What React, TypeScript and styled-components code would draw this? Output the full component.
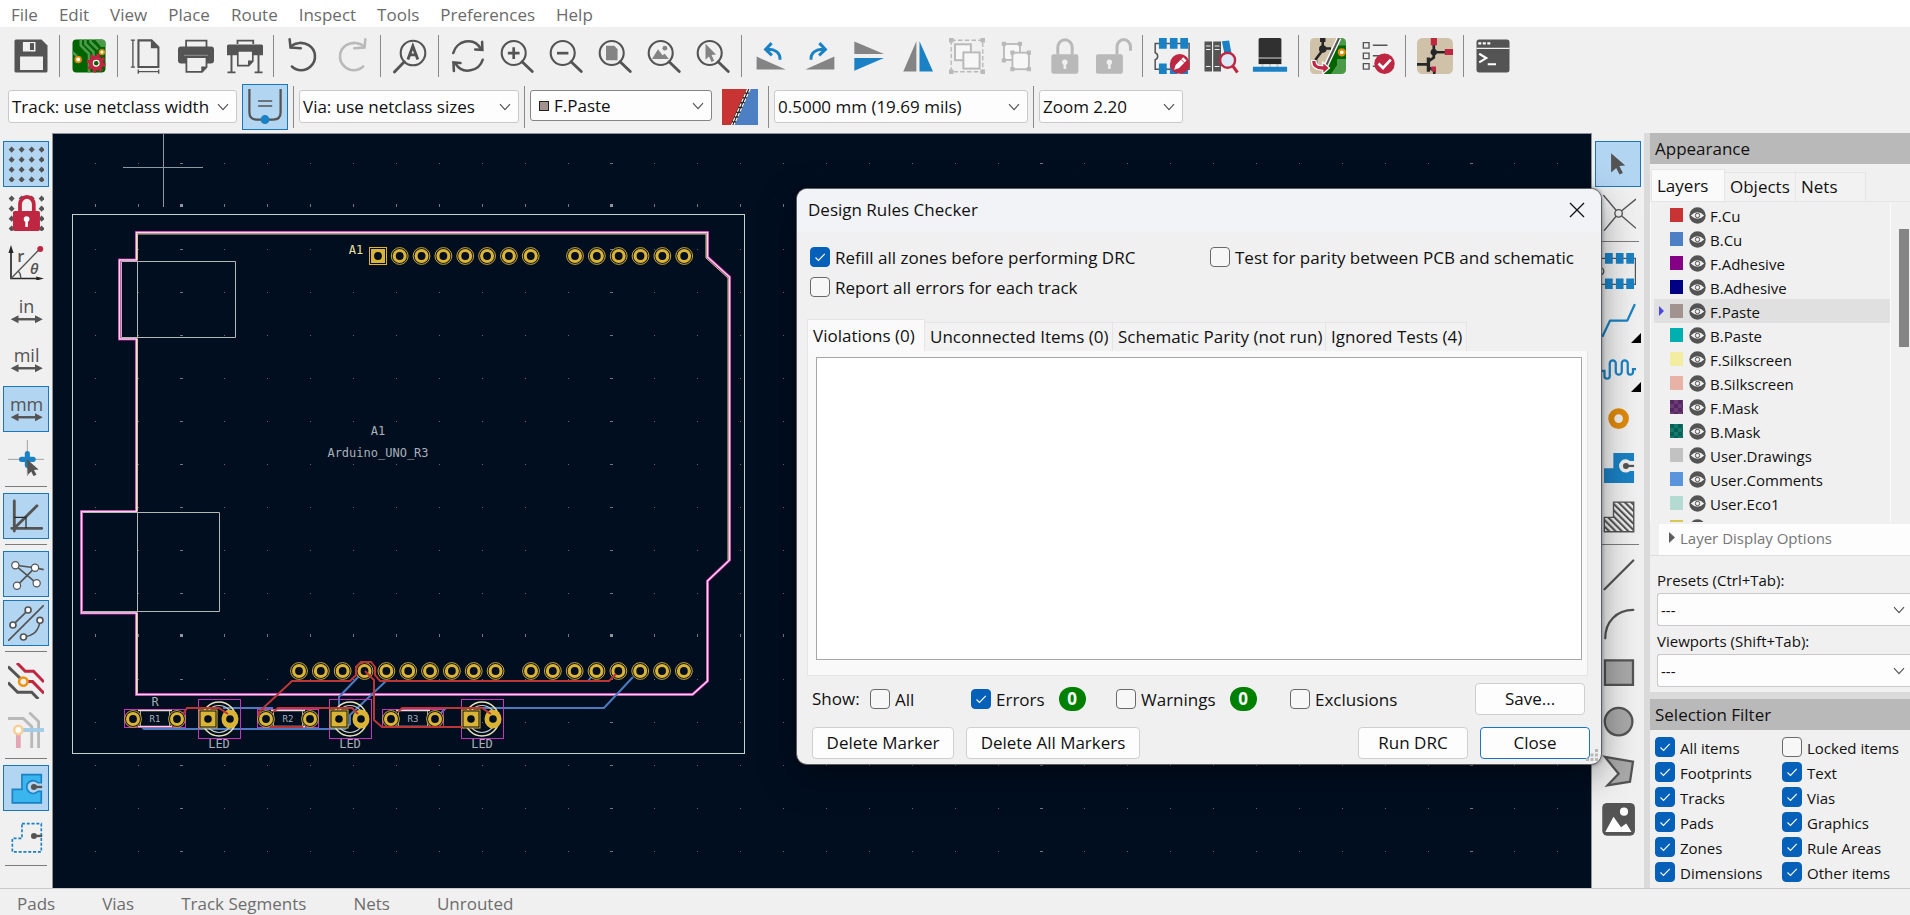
import React from "react";
import styled, { createGlobalStyle, css } from "styled-components";

const DARK = "#545454";
const BLUE = "#1a81c4";
const RED = "#bf2641";
const GREY = "#848484";
const PALE = "#b9b9b9";

const GlobalStyle = createGlobalStyle`
  *, *::before, *::after { box-sizing: border-box; }
  body {
    margin: 0;
    background: #f0f0f0;
    color: #111;
    font-family: "Open Sans", "Noto Sans", sans-serif;
    font-size: 17px;
    line-height: 20px;
  }
  button, input, select { font: inherit; color: inherit; margin: 0; }
  svg { display: block; }
`;

/* ---------- page frame ---------- */

const Page = styled.div`
  position: relative;
  display: flex;
  flex-direction: column;
  min-height: 100vh;
`;

const MenuBar = styled.nav`
  display: flex;
  height: 27px;
  background: #fff;
`;

const MenuItem = styled.button`
  border: 0;
  background: none;
  padding: 2px 10px 0 11px;
  color: #6b6b6b;
`;

const MainToolbar = styled.div`
  display: flex;
  align-items: center;
  height: 57px;
  padding: 0 6px;
`;

const OptionsToolbar = styled.div`
  display: flex;
  align-items: flex-start;
  gap: 5px;
  height: 49px;
  padding: 0 8px;
`;

const Workspace = styled.main`
  display: flex;
  flex: 1;
  min-height: 0;
  border-bottom: 1px solid #c8c8c8;
`;

const SideToolbar = styled.div`
  display: flex;
  flex-direction: column;
  gap: 3px;
  width: 52px;
  flex: none;
  padding: 8px 3px 0;
`;

const Canvas = styled.section`
  flex: 1;
  min-width: 0;
  overflow: hidden;
  position: relative;
  border: 1px solid #8f9296;
  border-bottom: 0;
  background: #000e20;
  svg { position: absolute; inset: 0; }
`;

const StatusBar = styled.footer`
  display: flex;
  align-items: center;
  gap: 47px;
  height: 26px;
  padding: 3px 17px 0;
  color: #6d6d6d;
`;

/* ---------- toolbar parts ---------- */

const ToolButton = styled.button<{ $active?: boolean }>`
  position: relative;
  display: grid;
  place-items: center;
  flex: none;
  width: 46px;
  height: 46px;
  padding: 0;
  border: 1px solid ${(p) => (p.$active ? "#1c76bd" : "transparent")};
  background: ${(p) => (p.$active ? "#b2d5f2" : "transparent")};
`;

const BarButton = styled(ToolButton)`
  margin: 0 1px 0 2px;
`;

const Corner = styled.span`
  position: absolute;
  right: -1px;
  bottom: -1px;
  border: 5px solid #000;
  border-top-color: transparent;
  border-left-color: transparent;
`;

const BarSeparator = styled.i`
  flex: none;
  width: 1px;
  height: 42px;
  margin: 0 4px;
  background: #8a8a8a;
`;

const OptionSeparator = styled.i`
  flex: none;
  width: 1px;
  height: 42px;
  margin-top: 2px;
  background: #8a8a8a;
`;

const SideSeparator = styled.i`
  height: 1px;
  margin: 2px 2px 3px;
  background: #7c7c7c;
`;

const Combo = styled.span<{ $width?: number; $strong?: boolean; $open?: boolean }>`
  display: grid;
  align-items: center;
  flex: none;
  width: ${(p) => (p.$width ? `${p.$width}px` : "100%")};
  margin-top: ${(p) => (p.$width ? 6 : 0)}px;
  > * { grid-area: 1 / 1; }
  > svg { justify-self: end; margin-right: ${(p) => (p.$open ? 5 : 8)}px; pointer-events: none; }
  select {
    appearance: none;
    width: 100%;
    height: ${(p) => (p.$strong ? 31 : 33)}px;
    padding: 0 20px 0 ${(p) => (p.$strong ? 23 : 3)}px;
    border: 1px solid ${(p) => (p.$strong ? "#868686" : "#c9c9c9")};
    border-radius: 3px;
    background: #fdfdfd;
    color: #111;
    ${(p) => p.$open && css`
      border-right: 0;
      border-radius: 3px 0 0 3px;
      font-size: 15px;
    `}
  }
`;

const Swatch = styled.i<{ $color: string; $framed?: boolean; $checker?: string }>`
  width: ${(p) => (p.$framed ? 10 : 13)}px;
  height: ${(p) => (p.$framed ? 10 : 14)}px;
  margin-left: ${(p) => (p.$framed ? 9 : 0)}px;
  background: ${(p) => p.$color};
  border: ${(p) => (p.$framed ? "1px solid #222" : "0")};
  pointer-events: none;
  ${(p) => p.$checker && css`
    background: repeating-conic-gradient(${p.$color} 0 25%, ${p.$checker} 0 50%) 0 0 / 8px 8px;
  `}
`;

/* ---------- right-hand panel ---------- */

const Panel = styled.aside`
  flex: none;
  width: 266px;
  border-left: 6px solid #dadada;
`;

const PanelTitle = styled.h2`
  margin: 0;
  height: 31px;
  padding: 6px 5px 0;
  background: #b9b9b9;
  font-size: 17px;
  font-weight: 400;
`;

const Tabs = styled.div`
  display: flex;
  align-items: flex-end;
`;

const PanelTabs = styled(Tabs)`
  height: 37px;
  padding-left: 1px;
`;

const Tab = styled.button<{ $selected?: boolean; $width?: number }>`
  width: ${(p) => (p.$width ? `${p.$width}px` : "auto")};
  height: ${(p) => (p.$selected ? 32 : 29)}px;
  padding: 0 4px 0 5px;
  text-align: left;
  white-space: nowrap;
  border: 1px solid #e5e5e5;
  border-bottom: 0;
  border-left-width: ${(p) => (p.$selected ? 1 : 0)}px;
  background: ${(p) => (p.$selected ? "#fafafa" : "#f2f2f2")};
`;

const LayerPage = styled.div`
  display: flex;
  border-top: 1px solid #e5e5e5;
  border-left: 1px solid #fafafa;
  padding: 1px 0 0 3px;
  height: 321px;
`;

const LayerList = styled.ul`
  flex: 1;
  margin: 0;
  padding: 0;
  overflow: hidden;
  list-style: none;
  background: #f0f0f0;
  font-size: 15px;
`;

const LayerRow = styled.li<{ $current?: boolean }>`
  display: grid;
  grid-template-columns: 16px 19px 21px 1fr;
  align-items: center;
  height: 24px;
  background: ${(p) => (p.$current ? "#e0e0e0" : "transparent")};
  span { padding-top: 1px; }
`;

const ScrollTrack = styled.div`
  width: 20px;
  border-left: 1px solid #fbfbfb;
  padding: 26px 1px 0 8px;
`;

const ScrollThumb = styled.div`
  height: 118px;
  background: #858585;
`;

const DisplayOptions = styled.button`
  display: flex;
  align-items: center;
  gap: 5px;
  width: calc(100% - 9px);
  height: 31px;
  margin: 2px 0 0 9px;
  padding: 0 10px 4px;
  border: 0;
  background: #fdfdfd;
  color: #767676;
  font-size: 15px;
`;

const PresetForm = styled.div`
  display: flex;
  flex-direction: column;
  border-top: 1px solid #dedede;
  padding: 14px 0 0 7px;
  font-size: 15px;
  label { height: 23px; }
  label + span { margin-bottom: 5px; }
`;

const FilterTitle = styled(PanelTitle)`
  border-top: 7px solid #dadada;
  height: 38px;
`;

const FilterGrid = styled.div`
  display: grid;
  grid-template-columns: 127px 1fr;
  row-gap: 5px;
  padding: 7px 0 6px 5px;
  font-size: 15px;
  white-space: nowrap;
`;

/* ---------- check box ---------- */

const CheckLabel = styled.label`
  display: flex;
  align-items: center;
  gap: 5px;
  height: 20px;
`;

const CheckCell = styled.span`
  display: grid;
  place-items: center;
  > * { grid-area: 1 / 1; }
  svg { pointer-events: none; visibility: hidden; }
  input {
    appearance: none;
    width: 20px;
    height: 20px;
    border: 1px solid #6a6a6a;
    border-radius: 4px;
    background: #f7f7f7;
  }
  input:checked { background: #0560b9; border-color: #0560b9; }
  input:checked + svg { visibility: visible; }
`;

const CheckText = styled.span`
  padding-top: 2px;
`;

function Check({ label, checked }: { label: string; checked?: boolean }) {
  return (
    <CheckLabel>
      <CheckCell>
        <input type="checkbox" defaultChecked={checked} />
        <svg width="12" height="12" viewBox="0 0 12 12" fill="none" stroke="#fff" strokeWidth="1.1">
          <path d="M1.5 6.5 4.5 9.5 10.8 2.8" />
        </svg>
      </CheckCell>
      <CheckText>{label}</CheckText>
    </CheckLabel>
  );
}

/* ---------- dialog ---------- */

const Dialog = styled.section`
  position: absolute;
  left: 796px;
  top: 188px;
  width: 806px;
  border: 1px solid #5a5f66;
  border-radius: 11px;
  background: #f0f0f0;
  box-shadow: 0 12px 36px rgba(0, 0, 0, 0.38), 0 0 4px rgba(0, 0, 0, 0.4);
  overflow: hidden;
`;

const DialogTitle = styled.header`
  display: flex;
  align-items: center;
  justify-content: space-between;
  height: 43px;
  padding: 0 16px 2px 11px;
  background: #f1f3f7;
  h1 { margin: 0; font-size: 17px; font-weight: 400; }
  button { border: 0; background: none; padding: 0; }
`;

const DialogBody = styled.div`
  padding: 15px 11px 5px 10px;
`;

const RunOptions = styled.div`
  display: grid;
  grid-template-columns: 400px 1fr;
  gap: 10px 0;
  padding: 0 3px 22px;
  white-space: nowrap;
`;

const ResultPage = styled.div`
  height: 325px;
  margin-right: 2px;
  padding: 6px 5px 15px 8px;
  border: 1px solid #e5e5e5;
  border-top: 0;
  background: #f9f9f9;
`;

const ResultList = styled.div`
  height: 303px;
  border: 1px solid #a6a6a6;
  background: #fff;
`;

const ShowRow = styled.div`
  display: grid;
  grid-template-columns: 58px 101px 145px 174px 1fr 110px;
  align-items: center;
  padding: 7px 5px 12px 5px;
`;

const CountGroup = styled.div`
  display: flex;
  align-items: center;
  gap: 14px;
`;

const Count = styled.b`
  width: 27px;
  height: 24px;
  border-radius: 12px;
  background: #008000;
  color: #fff;
  font-size: 17px;
  line-height: 23px;
  text-align: center;
`;

const ButtonRow = styled.div`
  display: flex;
  gap: 12px;
  padding-left: 5px;
`;

const PushButton = styled.button<{ $width: number; $primary?: boolean; $pushRight?: boolean }>`
  width: ${(p) => p.$width}px;
  height: 32px;
  margin-left: ${(p) => (p.$pushRight ? "auto" : "0")};
  padding: 0;
  border: 1px solid ${(p) => (p.$primary ? "#1c76bd" : "#cfcfcf")};
  border-radius: 4px;
  background: #fdfdfd;
`;

const Grip = styled.svg`
  position: absolute;
  right: 3px;
  bottom: 3px;
`;

/* ---------- icons, all on a 24-unit grid ---------- */

function Icon({ children }: { children: React.ReactNode }) {
  return (
    <svg width="36" height="36" viewBox="0 0 24 24" fill="none" aria-hidden="true">
      {children}
    </svg>
  );
}

const Chevron = () => (
  <svg width="12" height="8" viewBox="0 0 12 8" fill="none" stroke="#555" strokeWidth="1.2">
    <path d="M1 1.2 6 6.6 11 1.2" />
  </svg>
);

const Lens = ({ children }: { children?: React.ReactNode }) => (
  <Icon>
    <circle cx="9.8" cy="10" r="8" stroke={DARK} strokeWidth="1.4" />
    <path d="M15.4 15.8 22.2 22.4" stroke={DARK} strokeWidth="1.9" strokeLinecap="round" />
    {children}
  </Icon>
);

const Save = () => (
  <Icon>
    <path fill={DARK} d="M2 1H19L23 5V22a1 1 0 0 1-1 1H2a1 1 0 0 1-1-1V2A1 1 0 0 1 2 1Z" />
    <path fill="#f0f0f0" d="M6.6 2.6H15V9H6.6ZM4.7 12.4H20V21.4H4.7Z" />
    <path fill={DARK} d="M11.3 3.4h2.7V8h-2.7Z" />
  </Icon>
);

const BoardSetup = () => (
  <Icon>
    <defs><clipPath id="bs"><rect x="1" y="1" width="22" height="22" rx="2.6" /></clipPath></defs>
    <g clipPath="url(#bs)">
      <path fill="#006400" d="M0 0h24v24H0Z" />
      <path stroke="#4c9a4a" strokeWidth="1.7" d="M6.5 0V5L12 10.5V24M9.6 0V4L15 9.4V12M13 0V2.6L18 7.6M1 9.5 4 12" />
      <path fill="#4c9a4a" d="M15 0H24V6L20 6Z" />
      <circle cx="4.8" cy="14.3" r="1.9" fill="#fff" stroke="#e08a0a" strokeWidth="1.2" />
      <circle cx="20.6" cy="9.4" r="1.6" fill="#fff" stroke="#e08a0a" strokeWidth="1.1" />
    </g>
    <circle cx="16.8" cy="16.8" r="3.6" stroke={RED} strokeWidth="2.6" fill="#fff" />
    <circle cx="16.8" cy="16.8" r="5.3" stroke={RED} strokeWidth="2.2" strokeDasharray="2.1 2.06" />
    <circle cx="16.8" cy="16.8" r="1.5" fill="#006400" />
  </Icon>
);

const PageSetup = () => (
  <Icon>
    <path stroke={DARK} strokeWidth="1.4" d="M6.3 1.6H15L19.6 6.2V19.3H6.3Z" />
    <path fill={DARK} d="M14.6 1.6V6.8H19.8Z" />
    <path stroke={DARK} strokeWidth=".9" d="M2.6 1.4V19.4M1.2 1.4H4M1.2 19.4H4M6.2 22.4H19.8M6.2 21V23.8M19.8 21V23.8" />
  </Icon>
);

const Print = () => (
  <Icon>
    <path stroke={DARK} strokeWidth="1.2" d="M5.4 6V1.7H19V6" />
    <path fill={DARK} d="M2 5.6H22a2 2 0 0 1 2 2V15a2 2 0 0 1-2 2H2a2 2 0 0 1-2-2V7.6A2 2 0 0 1 2 5.6Z" />
    <path stroke={GREY} strokeWidth=".9" d="M4 11.6H20" />
    <path fill="#f0f0f0" stroke={DARK} strokeWidth="1.2" d="M5.6 12.7H19V19.5L16 22.6H5.6Z" />
    <path fill={DARK} d="M15.5 19H19.4L15.5 23Z" />
  </Icon>
);

const Plot = () => (
  <Icon>
    <path stroke={DARK} strokeWidth="1.2" d="M7 4V1.7H17.5V4" />
    <path fill={DARK} d="M1 4.3H23a1 1 0 0 1 1 1V11.5H0V5.3A1 1 0 0 1 1 4.3Z" />
    <path fill="#f0f0f0" stroke={DARK} strokeWidth="1.1" d="M7.2 8.6H17.2V15.5L14.5 18.4H7.2Z" />
    <path fill={DARK} d="M14 15H17.6L14 18.9Z" />
    <path stroke={DARK} strokeWidth="1.3" d="M3 11V22.7M21 11V22.7M.3 22.9H5.7M18.4 22.9H23.7" />
  </Icon>
);

const Undo = ({ redo }: { redo?: boolean }) => (
  <Icon>
    <g transform={redo ? "matrix(-1 0 0 1 24 0)" : undefined} stroke={redo ? PALE : DARK} strokeWidth="1.7" strokeLinecap="round">
      <path d="M4 5.5C7 2.9 12 2.4 15.8 4.8A8.9 8.9 0 0 1 17 19C13.5 22.4 8 22.3 4.6 19" />
      <path d="M3.1 .9 3.7 6.4 10.5 6.8" />
    </g>
  </Icon>
);

const Find = () => (
  <Icon>
    <circle cx="14" cy="10" r="8.2" stroke={DARK} strokeWidth="1.4" />
    <path d="M8.2 15.8 1.6 22.6" stroke={DARK} strokeWidth="1.9" strokeLinecap="round" />
    <path d="M10.6 14.4 13.9 5.4 17.2 14.4M11.8 11.2H16" stroke={DARK} strokeWidth="1.9" />
  </Icon>
);

const Refresh = () => (
  <Icon>
    <g stroke={DARK} strokeWidth="1.7" strokeLinecap="round">
      <path d="M2.2 10C4 2.2 15.5-1.5 20.6 7.2" />
      <path d="M21.4 2.6 21.6 7.9 16.8 7.7" />
      <path d="M21.8 14.5C19.5 22 8.6 25 3.6 17" />
      <path d="M2.6 22 2.3 16.3 7 16.6" />
    </g>
  </Icon>
);

const Rotate = ({ cw }: { cw?: boolean }) => (
  <Icon>
    <g transform={cw ? "matrix(-1 0 0 1 24 0)" : undefined}>
      <path fill={GREY} d="M2.4 12.4V21H21.8Z" />
      <path stroke={BLUE} strokeWidth="2" d="M18 14.5C18.3 9.8 14.5 7 9 7.6M12.4 3.4 8.4 7.6 12.6 11.6" />
    </g>
  </Icon>
);

const FlipV = () => (
  <Icon>
    <path fill={GREY} d="M2.2 2.4 22 10.7H2.2Z" />
    <path fill={BLUE} d="M2.2 21.8 22 13.3H2.2Z" />
  </Icon>
);

const FlipH = () => (
  <Icon>
    <path fill={GREY} d="M10.9 2.2V22.4H2.2Z" />
    <path fill={BLUE} d="M13 2.2V22.4H22Z" />
  </Icon>
);

const Group = () => (
  <Icon>
    <rect x="1.5" y="1.5" width="21" height="21" stroke={PALE} strokeWidth=".9" strokeDasharray="3 1.5" />
    <rect x="4" y="4.2" width="10.6" height="10.6" fill="#f7f7f7" stroke={PALE} strokeWidth="1.3" />
    <rect x="9.6" y="9.6" width="10.8" height="10.8" fill="#f7f7f7" stroke={PALE} strokeWidth="1.3" />
    <path fill={PALE} d="M0 0H3V3H0ZM21 0H24V3H21ZM0 21H3V24H0ZM21 21H24V24H21Z" />
  </Icon>
);

const Ungroup = () => (
  <Icon>
    <rect x="4" y="4" width="10.6" height="10.6" fill="#f7f7f7" stroke={PALE} strokeWidth="1.2" />
    <rect x="9.6" y="9.8" width="11" height="11" fill="#f7f7f7" stroke={PALE} strokeWidth="1.2" />
    <path fill={PALE} d="M2.5 2.5H5.3V5.3H2.5ZM13.2 2.5H16V5.3H13.2ZM2.5 13.5H5.3V16.3H2.5ZM8.2 8.4H11V11.2H8.2ZM19.2 8.4H22V11.2H19.2ZM8.2 19.4H11V22.2H8.2ZM19.2 19.4H22V22.2H19.2Z" />
  </Icon>
);

const Padlock = ({ open }: { open?: boolean }) => (
  <Icon>
    <g transform={open ? "translate(-3 0)" : undefined}>
      <rect x="2.9" y="10.8" width="18" height="13" rx="1.5" fill={PALE} />
      <path stroke={PALE} strokeWidth="2" d={open ? "M17 11V6A4.500 5 0 0 1 26 6V8.500" : "M7.2 11V6.3A4.8 5.2 0 0 1 16.8 6.3V11"} />
      <circle cx="11.9" cy="16.2" r="1.8" fill="#f0f0f0" />
      <path d="M11.9 17V20.6" stroke="#f0f0f0" strokeWidth="1.7" />
    </g>
  </Icon>
);

const FootprintPads = () => (
  <path fill={BLUE} d="M3.3 0H8.5V7.2H3.3ZM10.6 0H15.7V7.2H10.6ZM17.5 0H22.7V7.2H17.5ZM3.3 17H8.5V24H3.3ZM10.6 17H15.7V24H10.6ZM17.5 17H22.7V24H17.5Z" />
);

const Footprint = () => (
  <Icon>
    <path stroke={DARK} strokeWidth=".8" d="M.9 3.6H23.6V20.9H.9V14.5A2.5 2.5 0 0 0 .9 9.8Z" />
    <FootprintPads />
  </Icon>
);

const FootprintEdit = () => (
  <Icon>
    <path stroke={DARK} strokeWidth="1" d="M.8 3.6H23.4V20.9H.8V14.5A2.5 2.5 0 0 0 .8 9.8Z" />
    <FootprintPads />
    <circle cx="17.2" cy="17.3" r="6.6" fill={RED} />
    <path d="M13.4 21.2 14.4 18 19.5 12.800 21.700 15 16.600 20.200Z" fill="#fff" />
    <path d="M18 14.200 20.300 16.500" stroke={RED} strokeWidth=".6" />
  </Icon>
);

const Library = () => (
  <Icon>
    <path fill={DARK} d="M1 2.4H6V22.4H1ZM6.8 2.4H12V22.4H6.8Z" />
    <path stroke="#f0f0f0" strokeWidth=".7" d="M2 5.3H5M2 7.6H5M2 19H5M7.8 5.3H11M7.8 7.6H11M7.8 19H11" />
    <path fill={BLUE} d="M12.6 2.2 17.4 1.6 20.5 18 16 19Z" />
    <circle cx="16.4" cy="14.8" r="5" fill="#dbeaf6" stroke={RED} strokeWidth="1.6" />
    <path d="M19.8 18.6 23 23" stroke={RED} strokeWidth="2" />
  </Icon>
);

const Chip3D = () => (
  <Icon>
    <path stroke="#cfcfcf" strokeWidth="1.4" d="M7 16V20M12 16V20M17 16V20" />
    <path fill="#303030" d="M5.4 0H18.6Q19.6 0 19.6 1V13H4.4V1Q4.4 0 5.4 0Z" />
    <path fill="#262626" d="M4.4 13.700H19.600V17.400H4.400Z" />
    <path stroke="#777" strokeWidth=".8" d="M4.4 13.3H19.6" />
    <path fill={BLUE} d="M.6 19.2H23.4V22.5H.6Z" />
  </Icon>
);

const UpdatePcb = () => (
  <Icon>
    <defs><clipPath id="up"><rect width="24" height="24" rx="3" /></clipPath></defs>
    <g clipPath="url(#up)">
      <path fill="#d0c2a8" d="M0 0H24V24H0Z" />
      <path fill="#4a9a48" d="M20 0H24V24H8Z" />
      <path fill="#006400" d="M18.5 5H24V14H18V18L14 24H9Z" />
      <path stroke="#262626" strokeWidth="1.7" d="M8.5 0V7M8.5 7H14M8.5 8 4 14V18" />
      <path fill="#262626" d="M6.7 0H10.3V2.6H6.7Z" />
      <circle cx="8.5" cy="7.4" r="2.5" fill="#262626" />
      <path stroke="#fff" strokeWidth="3.2" d="M19.4 0 9 22" />
      <path stroke={DARK} strokeWidth="1.4" d="M19.4 0 10 20" />
      <circle cx="21.2" cy="9.5" r="2" fill="#fff" stroke="#e08a0a" strokeWidth="1.5" />
      <path d="M4 15C4 18.5 6 18.5 8.5 18.5V16L13 20 8.5 24V21.5C3 21.5 1 19 1 15Z" fill={RED} stroke="#fff" strokeWidth=".8" />
    </g>
  </Icon>
);

const RuleCheck = () => (
  <Icon>
    <path stroke={DARK} strokeWidth=".9" d="M2.9 3.1H6.7V6.7H2.9ZM2.9 10.1H6.7V13.7H2.9ZM2.9 17.1H6.7V20.7H2.9Z" />
    <path stroke={DARK} strokeWidth="1" d="M9.2 4.9H19M9.2 11.9H14M9.2 18.9H11" />
    <circle cx="17" cy="17.2" r="6.8" fill={RED} />
    <path d="M13 17 16 20 21.2 14.4" stroke="#fff" strokeWidth="1.8" />
  </Icon>
);

const Schematic = () => (
  <Icon>
    <rect width="24" height="24" rx="3.5" fill="#d0c2a8" />
    <path stroke="#262626" strokeWidth="1.800" d="M11.2 3V9.5H20M11.2 9.5V13L7.8 15.5V19.5L11.5 22V24M0 17.6H7.6" />
    <path stroke="#262626" strokeWidth="2.200" d="M7.6 13V22.5" />
    <circle cx="11.2" cy="9.5" r="2.1" fill="#262626" />
    <path fill={RED} d="M9.2 0H13.3V4.8H9.2ZM18.5 7.4H24V11.3H18.5ZM9.5 19H12.7V23L9.5 21.5Z" />
  </Icon>
);

const Terminal = () => (
  <Icon>
    <rect x="1" y="1" width="22" height="22" rx="1.8" fill={DARK} />
    <path stroke="#f0f0f0" strokeWidth=".9" d="M1 6.9H23" />
    <path stroke="#fff" strokeWidth="1.5" strokeDasharray="2 1" d="M2.2 3.5H10.6" />
    <path stroke="#fff" strokeWidth="1.4" d="M2.8 10.5 7.5 13.4 2.8 16.2M8.5 17.5H14" />
  </Icon>
);

const TrackVia = () => (
  <Icon>
    <path stroke={DARK} strokeWidth="1.5" d="M1.6 0V15.5Q1.6 20.4 6.5 20.4H17.5Q22.4 20.4 22.4 15.5V0" />
    <path stroke={DARK} strokeWidth="1" d="M7.4 8H16.8M7.4 11.4H16.8" />
    <circle cx="12" cy="20.4" r="3" fill={BLUE} />
  </Icon>
);

const LayerPair = () => (
  <Icon>
    <path fill="#c83434" d="M0 0H17L6 24H0Z" />
    <path fill="#4d7fc4" d="M18.5 0H24V24H7.5Z" />
    <path stroke="#222" strokeWidth="2.6" d="M17.8 0 7 24" />
    <path stroke="#fff" strokeWidth=".8" strokeDasharray="2.5 1" d="M17 0 6.4 24M18.8 0 8 24" />
  </Icon>
);

const dotAxis = [2.4, 9.1, 15.8, 22.4];
const GridDots = () => (
  <>
    {dotAxis.flatMap((y) => dotAxis.map((x) => (
      <path key={`${x}-${y}`} fill={DARK} d={`M${x} ${y - 2.1}L${x + 2} ${y} ${x} ${y + 2.1} ${x - 2} ${y}Z`} />
    )))}
  </>
);

const Grid = () => <Icon><GridDots /></Icon>;

const GridLock = () => (
  <Icon>
    <GridDots />
    <path stroke="#f0f0f0" strokeWidth="4" d="M8 11V6.5A4.6 4.6 0 0 1 17 6.5V11" fill="#f0f0f0" />
    <path stroke={RED} strokeWidth="2.5" d="M8 11.5V6.2A4.6 4.9 0 0 1 17.2 6.2V11.5" />
    <rect x="3.3" y="10.7" width="18" height="13.3" rx="1.2" fill={RED} />
    <circle cx="12.4" cy="16" r="1.9" fill="#fff" />
    <path stroke="#fff" strokeWidth="1.7" d="M12.4 17V21.3" />
  </Icon>
);

const Polar = () => (
  <Icon>
    <path stroke="#262626" strokeWidth="1.1" d="M2 4V23H20" />
    <path fill="#262626" d="M2 .6 3.7 6H.3ZM24 23 18.8 21.6V24.4Z" />
    <path stroke={DARK} strokeWidth=".9" d="M2 23 21 3.5M7 18.2Q8.7 20 8.5 23" />
    <circle cx="21.5" cy="3.3" r="2" fill={RED} />
    <text x="6.2" y="11.8" fontSize="11" fontWeight="600" fill={DARK}>r</text>
    <text x="14.6" y="19.8" fontSize="10" fontWeight="600" fontStyle="italic" fill={DARK}>θ</text>
  </Icon>
);

const Units = ({ unit }: { unit: string }) => (
  <Icon>
    <text x="12.4" y="13" textAnchor="middle" fontSize="12" fontWeight="500" fill={DARK}>{unit}</text>
    <path stroke={DARK} strokeWidth="1.6" d="M5 17.5H20" />
    <path fill={DARK} d="M1.8 17.5 7 14.9V20.1ZM23.2 17.5 18 14.9V20.1Z" />
  </Icon>
);

const CursorCross = () => (
  <Icon>
    <path stroke="#9a9a9a" strokeWidth=".6" d="M12.9 0V24M0 12.9H24" />
    <path stroke={BLUE} strokeWidth="3.4" strokeLinecap="round" d="M12.9 9V16.8M9 12.9H16.8" />
    <path fill={DARK} d="M12.4 12.6 20.4 19.6 17.3 20 19 23.2 17 24 15.5 21 13.3 23.2Z" />
  </Icon>
);

const Angle45 = () => (
  <Icon>
    <path stroke={DARK} strokeWidth="1.9" strokeLinecap="round" d="M4.2 2V22M2.5 20.2H22.5M4.2 20.2 19.3 5.2" />
    <path stroke="#262626" strokeWidth=".8" d="M4.2 12.9H12V20.2" />
  </Icon>
);

const Ratsnest = () => (
  <Icon>
    <path stroke={DARK} strokeWidth="1.1" d="M4.9 6.2 19.1 18.2M18 7.8 6 19.8M4.9 6.2 18 7.8 23.8 9.1" />
    <g fill="#fff" stroke={DARK} strokeWidth=".8">
      <circle cx="4.9" cy="6.2" r="2.4" /><circle cx="18" cy="7.8" r="2.4" />
      <circle cx="6" cy="19.8" r="2.4" /><circle cx="19.1" cy="18.2" r="2.4" />
    </g>
  </Icon>
);

const CurvedRatsnest = () => (
  <Icon>
    <path stroke={DARK} strokeWidth="1.1" d="M0 24 24 0M13.6 3.3 3.3 13.3M21.3 10.2Q20.5 20.5 10.2 21.3" />
    <g fill="#fff" stroke={DARK} strokeWidth="1.1">
      <circle cx="13.4" cy="3.3" r="2" /><circle cx="3.3" cy="13.3" r="2" />
      <circle cx="21.3" cy="10.2" r="2" /><circle cx="10.3" cy="21.3" r="2" />
    </g>
  </Icon>
);

const NetColors = () => (
  <Icon>
    <path stroke={DARK} strokeWidth="2" d="M0 2.4 9 11M0 13 6.4 19.5H15.8L20.2 24" />
    <path stroke={RED} strokeWidth="2" d="M6 0 11.5 5.5H17L24 12.7M12 12.4H16.4L24 20.2" />
    <circle cx="10.2" cy="12.4" r="2.8" fill="#f0f0f0" stroke="#ee9410" strokeWidth="1.7" />
  </Icon>
);

const DimNets = () => (
  <Icon>
    <path stroke={PALE} strokeWidth="1.9" d="M0 4.3H10.2L15.8 9.8V24M14.2 .4 20.4 6.4V24" />
    <path stroke="#e3a6b2" strokeWidth="3.2" d="M6.9 13V24" />
    <path stroke="#a3cce6" strokeWidth="2.6" d="M8 12H24" />
    <circle cx="6.9" cy="12" r="2.8" fill="#fff" stroke="#f6ce96" strokeWidth="1.7" />
  </Icon>
);

const ZoneFilled = () => (
  <Icon>
    <path fill="#3bb5ee" stroke={BLUE} strokeWidth="1.1" d="M9.3 3.1H22.2V8.5H20A4.3 4.3 0 1 0 20 14.2H22.2V21.9H2.9V12.9H9.3Z" />
    <circle cx="17.3" cy="11.3" r="2" fill={DARK} />
    <path stroke={DARK} strokeWidth="1.6" d="M17.3 11.3H22.8" />
  </Icon>
);

const ZoneOutline = () => (
  <Icon>
    <path stroke={BLUE} strokeWidth="1.1" strokeDasharray="2 1.2" d="M9.3 3.1H22.2V21.9H2.9V12.9H9.3Z" />
    <circle cx="17.3" cy="11.3" r="2" fill={DARK} />
    <path stroke={DARK} strokeWidth="1.6" d="M17.3 11.3H22.8" />
  </Icon>
);

const Pointer = () => (
  <Icon>
    <path fill={DARK} d="M7.4 4.8 16.8 13 12.9 13.4 15.3 18 13 19 10.8 14.6 7.4 17.6Z" />
  </Icon>
);

const LocalRatsnest = () => (
  <Icon>
    <path stroke={DARK} strokeWidth=".9" d="M2.2 0 12.4 12.2 24 2.7M2.7 23.8 12.4 12.2 24 22.2" />
    <circle cx="12.4" cy="12.2" r="2.5" fill="#f0f0f0" stroke={DARK} strokeWidth=".9" />
  </Icon>
);

const Route = () => (
  <Icon><path stroke={BLUE} strokeWidth="1.5" strokeLinecap="round" strokeLinejoin="round" d="M1.8 22.6 6.7 12.4H18.2L23 2" /></Icon>
);

const Tune = () => (
  <Icon>
    <path stroke={BLUE} strokeWidth="1.5" strokeLinecap="round" d="M1.2 13.2H3V16.6A1.7 1.7 0 0 0 6.5 16.6V8.2A2 2 0 0 1 10.5 8.2V13.8A2 2 0 0 0 14.5 13.8V8.2A2 2 0 0 1 18.5 8.2V14A1.7 1.7 0 0 0 22 14V12H23.5" />
  </Icon>
);

const Via = () => (
  <Icon><circle cx="12.4" cy="12.4" r="4.9" stroke="#e08a0a" strokeWidth="4" /></Icon>
);

const ZoneTool = () => (
  <Icon>
    <path fill={BLUE} d="M8.9 2.7H22.7V8H20A4.4 4.4 0 1 0 20 14.6H22.7V22.7H2.7V12.9H8.9Z" />
    <circle cx="17.3" cy="11.3" r="2" fill={DARK} />
    <path stroke={DARK} strokeWidth="1.5" d="M17.3 11.3H22.7" />
  </Icon>
);

const RuleArea = () => (
  <Icon>
    <defs>
      <pattern id="hatch" width="3" height="3" patternUnits="userSpaceOnUse" patternTransform="rotate(-45)">
        <path fill={DARK} d="M0 0H1.4V3H0Z" />
      </pattern>
    </defs>
    <path fill="url(#hatch)" stroke={DARK} strokeWidth=".9" d="M9 2.7H22.5V22.5H2.9V12.9H9Z" />
  </Icon>
);

const Shape = ({ d, filled }: { d: string; filled?: boolean }) => (
  <Icon><path d={d} stroke={DARK} strokeWidth="1.5" strokeLinecap="round" fill={filled ? "#a9a9a9" : "none"} /></Icon>
);

const Picture = () => (
  <Icon>
    <rect x="1.5" y="1.3" width="21.8" height="21.8" rx="3.2" fill={DARK} />
    <circle cx="16" cy="7.1" r="2.7" fill="#fff" />
    <path fill="#fff" d="M3.5 20.6 9 10.5 14 17.5 17.5 15 21 20.6Z" />
  </Icon>
);

const Eye = () => (
  <svg width="17" height="17" viewBox="0 0 17 17" fill="none">
    <circle cx="8.5" cy="8.5" r="8.2" fill={DARK} />
    <path d="M1.8 8.5Q8.5 1.8 15.2 8.5 8.5 15.2 1.8 8.5Z" fill="#f0f0f0" />
    <circle cx="8.5" cy="8.5" r="2.2" stroke={DARK} strokeWidth="1" />
  </svg>
);

/* ---------- board drawing ---------- */

const BoardText = styled.text<{ $tone?: string; $small?: boolean }>`
  font: ${(p) => (p.$small ? 9 : 12)}px "DejaVu Sans Mono", monospace;
  fill: ${(p) => p.$tone ?? "#a9b0b8"};
  text-anchor: middle;
`;

const GOLD = "#dcb435";
const BOARD = "#000e20";

const Pad = ({ x, y, square }: { x: number; y: number; square?: boolean }) => (
  <g>
    {square ? (
      <>
        <rect x={x - 8.5} y={y - 8.5} width="17" height="17" stroke={GOLD} fill={BOARD} />
        <rect x={x - 7} y={y - 7} width="14" height="14" fill={GOLD} />
      </>
    ) : (
      <>
        <circle cx={x} cy={y} r="8.4" stroke={GOLD} strokeWidth=".9" fill={BOARD} />
        <circle cx={x} cy={y} r="7" fill={GOLD} />
      </>
    )}
    <circle cx={x} cy={y} r="3.9" fill={BOARD} />
  </g>
);

const series = (start: number, count: number) =>
  Array.from({ length: count }, (_, i) => start + i * 21.84);

const headerPads = [
  ...series(399.7, 7).map((x) => [x, 256]),
  ...series(575, 6).map((x) => [x, 256]),
  ...series(299, 10).map((x) => [x, 671]),
  ...series(531, 8).map((x) => [x, 671]),
];

const resistors = [
  { x: 155, name: "R1" },
  { x: 288, name: "R2" },
  { x: 413, name: "R3" },
];

const leds = [219, 350, 482];

const OUTLINE =
  "M136.5 232.5H707.5V257L729.5 277V560L707.5 581V681L692.5 694.5H136.5V613H81.5V511.5H136.5V339H119.5V260H136.5Z";

function Board() {
  return (
    <svg width="100%" height="100%" fill="none" role="img" aria-label="Board layout">
      <defs>
        <pattern id="minor" x="181" y="206" width="43" height="43" patternUnits="userSpaceOnUse">
          <path fill="#5b6976" d="M0 0H1V1H0Z" />
        </pattern>
        <pattern id="cols" x="180" y="206" width="430" height="43" patternUnits="userSpaceOnUse">
          <path fill="#6d7a86" d="M0 0H3V1H0Z" />
        </pattern>
        <pattern id="rows" x="181" y="204" width="43" height="430" patternUnits="userSpaceOnUse">
          <path fill="#6d7a86" d="M0 0H1V3H0Z" />
        </pattern>
        <pattern id="major" x="180" y="204" width="430" height="430" patternUnits="userSpaceOnUse">
          <path fill="#8c969f" d="M0 0H3V3H0Z" />
        </pattern>
      </defs>
      <g transform="translate(-53 -134)">
        {["minor", "cols", "rows", "major"].map((id) => (
          <rect key={id} width="4000" height="2400" fill={`url(#${id})`} />
        ))}
        <path stroke="#8b97a1" d="M163.5 133V207M123 167.5H203" />
        <rect x="72.5" y="214.5" width="672" height="539" stroke="#c3d3ce" />

        <path stroke="#c024a8" strokeWidth="3" d={OUTLINE} />
        <path stroke="#f6d8e6" strokeWidth="1.6" d={OUTLINE} />
        <path stroke="#cfc98c" strokeWidth="1" d="M137.5 260V234H706V258L728 278V560M137.5 339V511M137.5 613V693" />
        <path stroke="#b4b8b4" d="M121.5 261.5H235.5V337.5H121.5ZM137.5 261V338M83 512.5H219.5V611.5H83M137.5 512V611" />

        <g stroke="#4b7cc2" strokeWidth="2">
          <path d="M633 677 604 708H446L436 718M223 708H273M142 727 144 729H345L350 724V715L386 681M361 674 339 697V718M592 676 588 681" />
        </g>

        {headerPads.map(([x, y]) => <Pad key={`${x}-${y}`} x={x} y={y} />)}
        <Pad x={378} y={256} square />

        {resistors.map(({ x, name }) => (
          <g key={name}>
            <rect x={x - 30.5} y="709.5" width="61" height="18" stroke="#c434bd" />
            <path stroke="#e8dcd0" strokeWidth="1.5" d={`M${x - 17} 710.5H${x + 17}M${x - 17} 726.5H${x + 17}`} />
            <path stroke="#b5a888" d={`M${x - 14.5} 711V726M${x + 14.5} 711V726`} />
            <Pad x={x - 22} y={719} />
            <Pad x={x + 22} y={719} />
            <BoardText x={x} y={722} $small>{name}</BoardText>
          </g>
        ))}

        {leds.map((x) => (
          <g key={x}>
            <circle cx={x} cy="719" r="17" stroke="#e9e4b8" strokeWidth="1.5" />
            <circle cx={x} cy="719" r="13.5" stroke="#c9ccc4" strokeWidth="1.2" />
            <rect x={x - 20.5} y="699.5" width="42" height="39" stroke="#c434bd" />
            <rect x={x - 20} y="710" width="18" height="18" fill={BOARD} stroke={GOLD} />
            <rect x={x - 18.5} y="711.5" width="15" height="15" fill={GOLD} />
            <circle cx={x - 11} cy="719" r="3.8" fill={BOARD} />
            <ellipse cx={x + 11} cy="719" rx="8.5" ry="9.5" fill={GOLD} />
            <circle cx={x + 11} cy="719" r="3.8" fill={BOARD} />
            <BoardText x={x} y="748">LED</BoardText>
          </g>
        ))}

        <g stroke="#bd3636" strokeWidth="2">
          <path d="M259 716V712L292 681H350L356 675V667L361 662H371L375 667V675L380 681H609L616 674" />
          <path d="M365 671 374 680V720L382 727H462M183 714 187 708H219L228 714M273 712 278 708H352L358 714" />
          <path d="M270 727H303M398 712 402 708H482L491 714" />
        </g>

        <BoardText x="356" y="254" $tone="#e8e2a0">A1</BoardText>
        <BoardText x="378" y="435">A1</BoardText>
        <BoardText x="378" y="457">Arduino_UNO_R3</BoardText>
        <BoardText x="155" y="706">R</BoardText>
      </g>
    </svg>
  );
}

/* ---------- data ---------- */

const menus = ["File", "Edit", "View", "Place", "Route", "Inspect", "Tools", "Preferences", "Help"];

type Tool = { name: string; icon: React.ReactNode; active?: boolean; menu?: boolean };

const mainTools: Tool[][] = [
  [{ name: "Save", icon: <Save /> }],
  [{ name: "Board setup", icon: <BoardSetup /> }],
  [{ name: "Page settings", icon: <PageSetup /> }, { name: "Print", icon: <Print /> }, { name: "Plot", icon: <Plot /> }],
  [{ name: "Undo", icon: <Undo /> }, { name: "Redo", icon: <Undo redo /> }],
  [{ name: "Find", icon: <Find /> }],
  [
    { name: "Refresh", icon: <Refresh /> },
    { name: "Zoom in", icon: <Lens><path stroke={DARK} strokeWidth="1.8" d="M9.8 6.2V14M5.9 10.1H13.7" /></Lens> },
    { name: "Zoom out", icon: <Lens><path stroke={DARK} strokeWidth="1.8" d="M6 10.1H13.6" /></Lens> },
    { name: "Zoom to fit", icon: <Lens><path fill={GREY} d="M6 5.2H11.5L13.7 7.5V14.8H6Z" /></Lens> },
    { name: "Zoom to objects", icon: <Lens><path fill={GREY} d="M4 14 8 7.5 11 11.5 12.5 10.5 15.2 14Z" /><circle cx="12.6" cy="6.8" r="1.6" fill={GREY} /></Lens> },
    { name: "Zoom to selection", icon: <Lens><path fill={GREY} d="M7 3.8 14 11 11 11.4 12.8 15.2 11 16 9.3 12.4 7 14.5Z" /></Lens> },
  ],
  [
    { name: "Rotate counterclockwise", icon: <Rotate /> },
    { name: "Rotate clockwise", icon: <Rotate cw /> },
    { name: "Mirror vertically", icon: <FlipV /> },
    { name: "Mirror horizontally", icon: <FlipH /> },
    { name: "Group", icon: <Group /> },
    { name: "Ungroup", icon: <Ungroup /> },
    { name: "Lock", icon: <Padlock /> },
    { name: "Unlock", icon: <Padlock open /> },
  ],
  [
    { name: "Footprint editor", icon: <FootprintEdit /> },
    { name: "Footprint library", icon: <Library /> },
    { name: "3D viewer", icon: <Chip3D /> },
  ],
  [{ name: "Update from schematic", icon: <UpdatePcb /> }, { name: "Design rules checker", icon: <RuleCheck /> }],
  [{ name: "Schematic editor", icon: <Schematic /> }],
  [{ name: "Scripting console", icon: <Terminal /> }],
];

const leftTools: Tool[][] = [
  [
    { name: "Show grid", icon: <Grid />, active: true },
    { name: "Grid overrides", icon: <GridLock /> },
    { name: "Polar coordinates", icon: <Polar /> },
    { name: "Inches", icon: <Units unit="in" /> },
    { name: "Mils", icon: <Units unit="mil" /> },
    { name: "Millimeters", icon: <Units unit="mm" />, active: true },
    { name: "Full crosshairs", icon: <CursorCross /> },
  ],
  [{ name: "Constrain to 45 degrees", icon: <Angle45 />, active: true }],
  [
    { name: "Show ratsnest", icon: <Ratsnest />, active: true },
    { name: "Curved ratsnest", icon: <CurvedRatsnest />, active: true },
  ],
  [{ name: "Net highlighting", icon: <NetColors /> }, { name: "Dim inactive layers", icon: <DimNets /> }],
  [
    { name: "Filled zones", icon: <ZoneFilled />, active: true },
    { name: "Zone outlines", icon: <ZoneOutline /> },
  ],
];

const rightTools: Tool[][] = [
  [{ name: "Select", icon: <Pointer />, active: true }, { name: "Local ratsnest", icon: <LocalRatsnest /> }],
  [
    { name: "Add footprint", icon: <Footprint /> },
    { name: "Route tracks", icon: <Route />, menu: true },
    { name: "Tune length", icon: <Tune />, menu: true },
    { name: "Add via", icon: <Via /> },
    { name: "Add zone", icon: <ZoneTool /> },
    { name: "Add rule area", icon: <RuleArea /> },
  ],
  [
    { name: "Line", icon: <Shape d="M3 22.2 22.2 3" /> },
    { name: "Arc", icon: <Shape d="M3.5 22.2C3.5 11 11 3.5 22.2 3.3" /> },
    { name: "Rectangle", icon: <Shape filled d="M3.3 4.2H22V20.6H3.3Z" /> },
    { name: "Circle", icon: <Shape filled d="M3.2 12.4A9.2 9.2 0 1 1 21.6 12.4A9.2 9.2 0 1 1 3.2 12.4Z" /> },
    { name: "Polygon", icon: <Shape filled d="M3.3 3.3 22 6.4 20 19.8 5 22.2 12.4 14.5Z" /> },
    { name: "Image", icon: <Picture /> },
  ],
];

const layers: { name: string; color: string; checker?: string }[] = [
  { name: "F.Cu", color: "#c83434" },
  { name: "B.Cu", color: "#4d7fc4" },
  { name: "F.Adhesive", color: "#840084" },
  { name: "B.Adhesive", color: "#000084" },
  { name: "F.Paste", color: "#a39390" },
  { name: "B.Paste", color: "#00b0b0" },
  { name: "F.Silkscreen", color: "#f2eda1" },
  { name: "B.Silkscreen", color: "#e8b2a7" },
  { name: "F.Mask", color: "#6d3a78", checker: "#52285e" },
  { name: "B.Mask", color: "#14786c", checker: "#076054" },
  { name: "User.Drawings", color: "#c2c2c2" },
  { name: "User.Comments", color: "#5994dc" },
  { name: "User.Eco1", color: "#b4dbd2" },
  { name: "User.Eco2", color: "#d8c852" },
];

const filters: [string, boolean][] = [
  ["All items", true], ["Locked items", false],
  ["Footprints", true], ["Text", true],
  ["Tracks", true], ["Vias", true],
  ["Pads", true], ["Graphics", true],
  ["Zones", true], ["Rule Areas", true],
  ["Dimensions", true], ["Other items", true],
];

/* ---------- assembled parts ---------- */

function Select({ label, value, width, strong }: { label: string; value: string; width: number; strong?: boolean }) {
  return (
    <Combo $width={width} $strong={strong}>
      <select aria-label={label}><option>{value}</option></select>
      {strong && <Swatch $color="#a39390" $framed />}
      <Chevron />
    </Combo>
  );
}

function SideTools({ groups, endLine }: { groups: Tool[][]; endLine?: boolean }) {
  return (
    <SideToolbar role="toolbar">
      {groups.map((group, i) => (
        <React.Fragment key={i}>
          {group.map((t) => (
            <ToolButton key={t.name} $active={t.active} aria-label={t.name}>
              {t.icon}
              {t.menu && <Corner />}
            </ToolButton>
          ))}
          {(endLine || i < groups.length - 1) && <SideSeparator />}
        </React.Fragment>
      ))}
    </SideToolbar>
  );
}

function AppearancePanel() {
  return (
    <Panel>
      <PanelTitle>Appearance</PanelTitle>
      <PanelTabs role="tablist">
        <Tab role="tab" $selected $width={74}>Layers</Tab>
        <Tab role="tab" $width={71}>Objects</Tab>
        <Tab role="tab" $width={70}>Nets</Tab>
      </PanelTabs>
      <LayerPage>
        <LayerList>
          {layers.map((l) => (
            <LayerRow key={l.name} $current={l.name === "F.Paste"}>
              <svg width="16" height="10" viewBox="0 0 16 10">
                {l.name === "F.Paste" && <path d="M5 0 10 5 5 10Z" fill="#4a48e0" />}
              </svg>
              <Swatch $color={l.color} $checker={l.checker} />
              <Eye />
              <span>{l.name}</span>
            </LayerRow>
          ))}
        </LayerList>
        <ScrollTrack><ScrollThumb /></ScrollTrack>
      </LayerPage>
      <DisplayOptions>
        <svg width="6" height="11" viewBox="0 0 6 11"><path d="M0 0 6 5.5 0 11Z" fill="#5c5c5c" /></svg>
        Layer Display Options
      </DisplayOptions>
      <PresetForm>
        <label htmlFor="presets">Presets (Ctrl+Tab):</label>
        <Combo $open>
          <select id="presets"><option>---</option></select>
          <Chevron />
        </Combo>
        <label htmlFor="viewports">Viewports (Shift+Tab):</label>
        <Combo $open>
          <select id="viewports"><option>---</option></select>
          <Chevron />
        </Combo>
      </PresetForm>
      <FilterTitle>Selection Filter</FilterTitle>
      <FilterGrid>
        {filters.map(([name, on]) => <Check key={name} label={name} checked={on} />)}
      </FilterGrid>
    </Panel>
  );
}

function RulesDialog() {
  return (
    <Dialog role="dialog" aria-labelledby="drc-title">
      <DialogTitle>
        <h1 id="drc-title">Design Rules Checker</h1>
        <button aria-label="Close window">
          <svg width="16" height="16" viewBox="0 0 16 16" stroke="#111" strokeWidth="1.3"><path d="M1 1 15 15M15 1 1 15" /></svg>
        </button>
      </DialogTitle>
      <DialogBody>
        <RunOptions>
          <Check label="Refill all zones before performing DRC" checked />
          <Check label="Test for parity between PCB and schematic" />
          <Check label="Report all errors for each track" />
        </RunOptions>
        <Tabs role="tablist">
          <Tab role="tab" $selected $width={118}>Violations (0)</Tab>
          <Tab role="tab" $width={188}>Unconnected Items (0)</Tab>
          <Tab role="tab" $width={213}>Schematic Parity (not run)</Tab>
          <Tab role="tab" $width={141}>Ignored Tests (4)</Tab>
        </Tabs>
        <ResultPage role="tabpanel"><ResultList /></ResultPage>
        <ShowRow>
          <span>Show:</span>
          <Check label="All" />
          <CountGroup><Check label="Errors" checked /><Count>0</Count></CountGroup>
          <CountGroup><Check label="Warnings" /><Count>0</Count></CountGroup>
          <Check label="Exclusions" />
          <PushButton $width={110}>Save...</PushButton>
        </ShowRow>
        <ButtonRow>
          <PushButton $width={142}>Delete Marker</PushButton>
          <PushButton $width={174}>Delete All Markers</PushButton>
          <PushButton $width={110} $pushRight>Run DRC</PushButton>
          <PushButton $width={110} $primary>Close</PushButton>
        </ButtonRow>
      </DialogBody>
      <Grip width="12" height="12" viewBox="0 0 12 12" fill="#b8b8b8">
        <path d="M9 0h3v3H9ZM9 4.5h3v3H9ZM9 9h3v3H9ZM4.5 4.5h3v3h-3ZM4.5 9h3v3h-3ZM0 9h3v3H0Z" />
      </Grip>
    </Dialog>
  );
}

export default function App() {
  return (
    <Page>
      <GlobalStyle />
      <MenuBar>{menus.map((m) => <MenuItem key={m}>{m}</MenuItem>)}</MenuBar>
      <MainToolbar role="toolbar">
        {mainTools.map((group, i) => (
          <React.Fragment key={i}>
            {i > 0 && <BarSeparator />}
            {group.map((t) => <BarButton key={t.name} aria-label={t.name}>{t.icon}</BarButton>)}
          </React.Fragment>
        ))}
      </MainToolbar>
      <OptionsToolbar role="toolbar">
        <Select label="Track width" value="Track: use netclass width" width={229} />
        <ToolButton $active aria-label="Use track width"><TrackVia /></ToolButton>
        <OptionSeparator />
        <Select label="Via size" value="Via: use netclass sizes" width={220} />
        <OptionSeparator />
        <Select label="Active layer" value="F.Paste" width={182} strong />
        <ToolButton aria-label="Layer pair"><LayerPair /></ToolButton>
        <OptionSeparator />
        <Select label="Grid" value="0.5000 mm (19.69 mils)" width={254} />
        <OptionSeparator />
        <Select label="Zoom" value="Zoom 2.20" width={144} />
      </OptionsToolbar>
      <Workspace>
        <SideTools groups={leftTools} endLine />
        <Canvas><Board /></Canvas>
        <SideTools groups={rightTools} />
        <AppearancePanel />
      </Workspace>
      <StatusBar>
        <span>Pads</span>
        <span>Vias</span>
        <span>Track Segments</span>
        <span>Nets</span>
        <span>Unrouted</span>
      </StatusBar>
      <RulesDialog />
    </Page>
  );
}
